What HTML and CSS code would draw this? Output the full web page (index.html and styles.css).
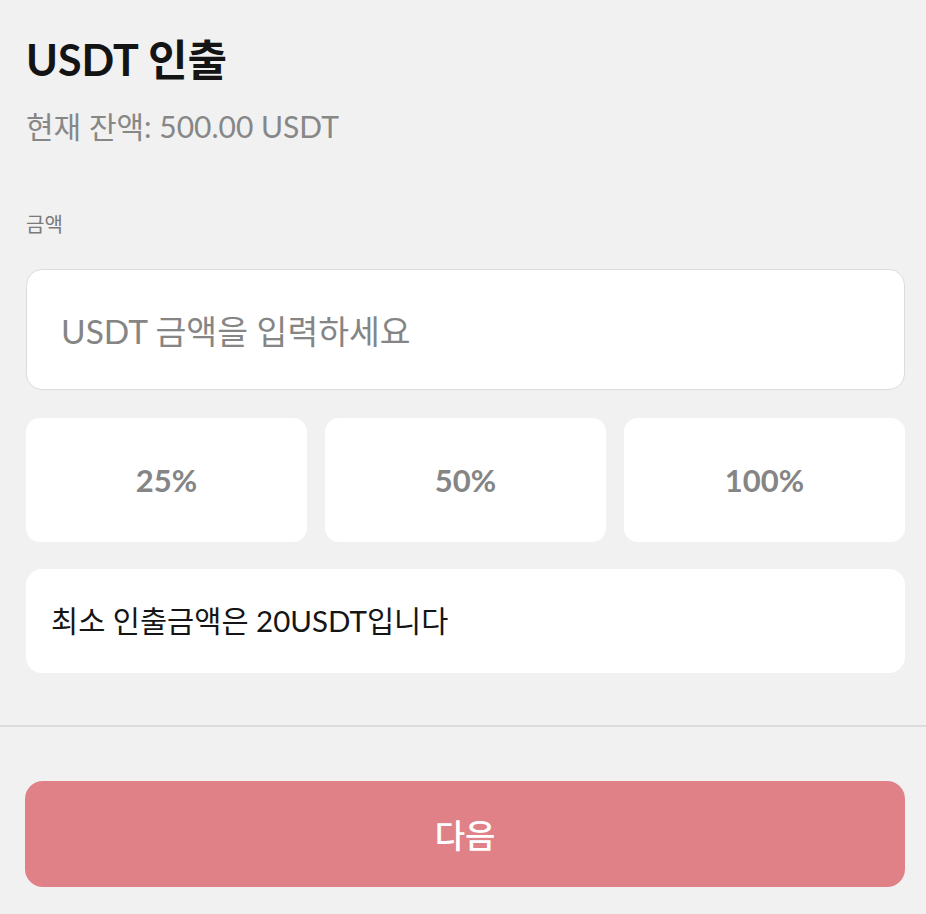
FILE: index.html
```html
<!DOCTYPE html>
<html lang="ko">
<head>
<meta charset="utf-8">
<title>USDT 인출</title>
<link rel="stylesheet" href="styles.css">
</head>
<body>
<div class="page">
  <div class="content">
    <h1 class="title">USDT 인출</h1>
    <p class="balance">현재 잔액: 500.00 USDT</p>
    <div class="label">금액</div>
    <div class="input">USDT 금액을 입력하세요</div>
    <div class="pcts">
      <div class="pct">25%</div>
      <div class="pct">50%</div>
      <div class="pct">100%</div>
    </div>
    <div class="notice">최소 인출금액은 20USDT입니다</div>
  </div>
  <div class="divider"></div>
  <div class="footer">
    <button class="next">다음</button>
  </div>
</div>
</body>
</html>
```

FILE: styles.css
```css
* { box-sizing: border-box; }
html, body { margin: 0; padding: 0; }
body {
  background: #f1f1f1;
  font-family: "Lato", "Noto Sans CJK KR", sans-serif;
  width: 926px;
  height: 914px;
  overflow: hidden;
}
.page { display: flex; flex-direction: column; }
.content {
  padding: 29px 21px 0 26px;
  display: flex;
  flex-direction: column;
}
.title {
  margin: 0;
  font-size: 43px;
  font-weight: 700;
  color: #141414;
  line-height: 62px;
}
.balance {
  margin: 14px 0 0;
  font-size: 30px;
  color: #878787;
  line-height: 42px;
}
.label {
  margin-top: 63px;
  font-size: 20px;
  color: #7a7a7a;
  line-height: 28px;
}
.input {
  margin-top: 31px;
  height: 121px;
  background: #fff;
  border: 1.5px solid #dcdcdc;
  border-radius: 16px;
  display: flex;
  align-items: center;
  padding-left: 34px;
  font-size: 33.5px;
  color: #858585;
}
.pcts {
  margin-top: 28px;
  display: grid;
  grid-template-columns: repeat(3, 1fr);
  gap: 18px;
}
.pct {
  height: 124px;
  background: #fff;
  border-radius: 14px;
  display: flex;
  align-items: center;
  justify-content: center;
  font-size: 31px;
  font-weight: 700;
  color: #858585;
}
.notice {
  margin-top: 27px;
  height: 104px;
  background: #fff;
  border-radius: 16px;
  display: flex;
  align-items: center;
  padding-left: 25px;
  padding-bottom: 4px;
  font-size: 29.5px;
  color: #151515;
}
.divider {
  margin-top: 52px;
  height: 1.5px;
  background: #dcdcdc;
}
.footer {
  padding: 54px 21px 0 25px;
}
.next {
  width: 100%;
  height: 106px;
  border: none;
  border-radius: 18px;
  background: #e08188;
  color: #fff;
  font-family: "Lato", "Noto Sans CJK KR", sans-serif;
  font-size: 33px;
  font-weight: 500;
  padding: 0;
}
```
